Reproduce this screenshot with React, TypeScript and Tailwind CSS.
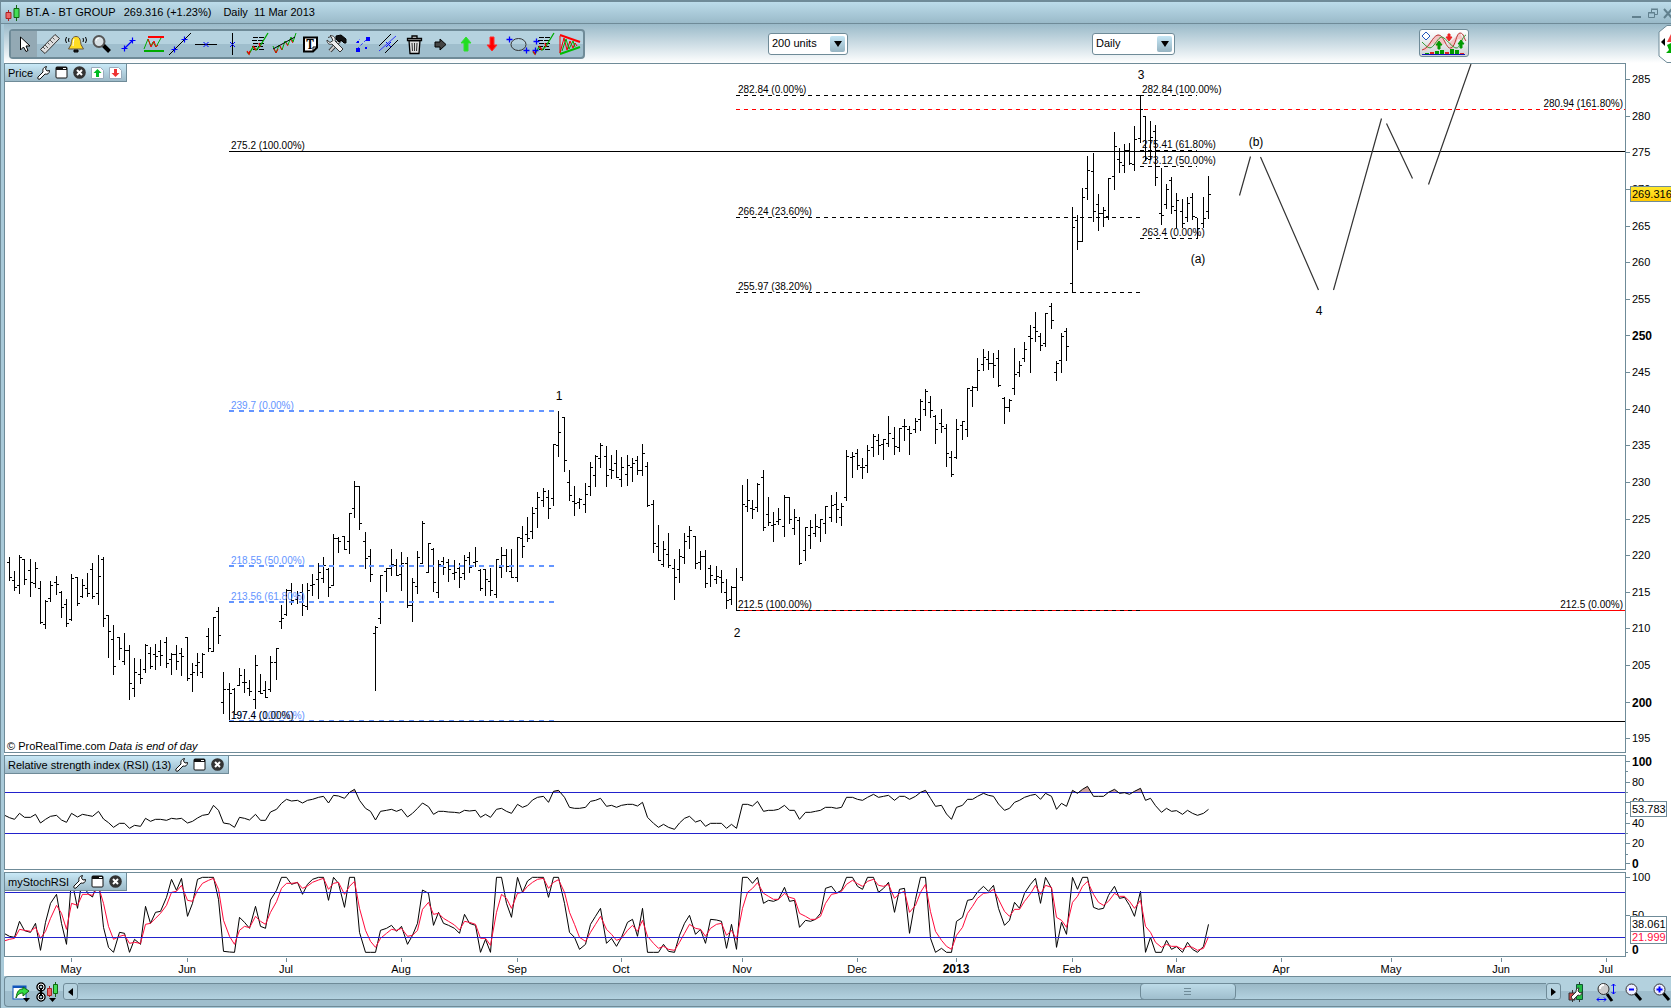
import { FC, ReactNode } from "react";

// one entry per session: high, low, open, close (chart y positions)
const BARS = `557 580 562 577,571 590 580 587,555 593 585 557,559 584 559 579,559 596 570 582,562 587 583 568,581 623 588 622,600 628 624 601,581 601 598 585,576 594 582 584,
591 617 592 607,599 626 604 623,574 620 619 578,577 605 577 603,579 597 596 585,573 596 588 593,563 598 569 596,555 604 593 576,557 626 559 618,615 657 615 631,
625 674 639 666,637 659 637 648,633 664 661 650,645 699 650 683,658 696 688 672,659 683 674 678,644 672 669 645,647 668 653 666,644 669 654 656,640 665 651 655,
637 667 642 663,653 674 659 654,645 669 654 661,648 675 653 656,637 680 637 678,663 691 674 672,653 675 665 662,653 677 672 654,628 651 636 648,617 651 651 617,
607 643 611 635,672 713 702 689,683 721 689 693,688 714 689 714,668 685 685 675,669 692 682 682,680 695 688 691,655 708 699 665,674 693 691 693,681 697 690 697,
656 691 689 662,648 679 662 648,605 628 621 618,589 615 614 590,583 604 590 600,591 603 599 595,584 615 592 605,583 609 606 590,574 595 585 584,563 598 579 572,
557 582 578 565,568 596 569 587,534 585 585 538,537 552 538 541,536 549 536 549,513 553 541 513,481 517 508 486,486 529 486 523,532 568 541 558,549 581 556 574,
626 690 633 627,575 623 618 575,568 591 571 568,549 575 568 564,559 575 565 575,552 590 574 563,557 607 563 605,578 621 605 582,551 593 586 557,521 563 563 523,
543 572 572 543,548 591 549 582,560 597 592 564,557 574 561 567,559 581 562 569,560 579 573 572,563 587 568 577,555 579 573 560,552 572 557 567,547 566 562 561,
569 590 570 588,569 595 569 579,568 595 581 590,559 597 594 559,547 577 567 555,549 571 555 566,549 577 571 577,537 581 577 537,526 557 538 546,517 541 534 538,
507 538 531 513,492 527 508 497,488 506 500 491,490 518 497 508,444 505 498 444,411 456 445 432,417 471 417 460,470 500 482 495,486 515 501 503,498 508 502 499,
483 512 504 494,462 495 486 467,455 486 475 456,443 467 458 445,446 486 456 475,455 478 469 470,450 477 463 477,457 486 479 467,455 485 474 465,458 481 467 463,
456 474 460 470,444 475 470 453,462 506 466 505,500 552 504 543,525 560 546 560,541 566 564 549,533 567 554 565,559 599 568 577,549 582 569 556,533 563 557 541,
526 548 536 530,536 568 536 563,551 569 562 556,550 587 556 583,565 586 568 575,566 583 579 576,570 592 577 582,579 608 592 600,586 604 599 587,568 610 587 610,
485 580 577 504,479 511 506 500,500 518 508 509,483 511 507 484,470 530 477 527,497 525 514 522,512 541 525 524,508 524 521 519,495 536 526 497,497 523 497 519,
509 534 528 517,517 564 520 563,527 560 550 527,520 548 535 527,514 536 533 526,519 541 527 519,506 533 523 506,495 521 517 505,492 522 504 509,503 525 517 506,
450 500 497 456,452 477 457 456,449 469 453 465,458 478 467 467,445 472 465 450,434 456 447 436,434 454 440 445,439 459 444 439,416 446 443 433,427 454 438 446,
428 451 447 428,419 440 426 426,426 454 429 433,418 432 429 421,399 430 419 401,389 415 409 391,396 417 402 410,415 443 416 429,409 432 423 426,424 466 428 453,
451 476 457 474,419 458 457 429,421 439 425 421,388 436 429 388,386 406 390 387,358 390 387 370,349 370 364 357,351 369 359 363,353 377 363 365,350 386 358 385,
397 423 398 407,399 411 407 400,348 394 388 374,361 376 372 365,342 361 358 349,325 372 336 338,312 341 327 331,333 350 336 345,313 346 343 313,303 328 306 320,
361 380 372 363,333 372 360 336,328 360 331 346,207 292 283 227,215 249 220 241,188 241 241 197,156 199 188 170,153 221 171 211,194 230 204 213,207 226 213 210,
178 219 216 178,132 189 176 146,148 172 159 162,144 172 165 150,143 164 150 163,126 170 164 139,95 142 138 109,116 160 116 158,121 159 159 137,125 185 131 177,
168 224 213 215,184 208 204 189,177 213 180 206,193 227 210 200,199 227 211 223,197 221 217 203,193 219 197 216,218 238 217 228,197 227 223 218,176 218 211 194`
  .split(",")
  .map((b) => b.trim().split(" ").map(Number));

// indicator levels are kept at three steps per pixel
const RSI = [
  203, 208, 190, 202, 202, 193, 219, 208, 199, 196, 210, 217, 190, 201, 193, 196, 199, 184, 207, 218,
  232, 220, 220, 235, 226, 229, 205, 214, 208, 208, 211, 205, 207, 205, 219, 214, 204, 196, 193, 166,
  181, 219, 222, 232, 202, 205, 210, 193, 211, 211, 186, 178, 160, 148, 153, 151, 159, 151, 148, 142,
  139, 159, 136, 138, 145, 127, 118, 151, 175, 184, 210, 184, 181, 178, 184, 178, 201, 190, 175, 159,
  170, 193, 184, 184, 186, 187, 189, 181, 183, 181, 202, 193, 202, 178, 175, 184, 190, 163, 172, 166,
  150, 142, 139, 157, 124, 121, 142, 172, 175, 175, 172, 154, 151, 145, 169, 166, 172, 166, 163, 163,
  168, 157, 202, 220, 232, 223, 232, 238, 219, 205, 199, 216, 211, 229, 220, 220, 220, 235, 223, 235,
  163, 163, 168, 154, 184, 181, 181, 178, 166, 181, 181, 208, 187, 187, 184, 181, 172, 172, 175, 172,
  142, 142, 148, 151, 142, 133, 142, 139, 136, 151, 139, 139, 148, 139, 127, 121, 145, 169, 166, 192,
  208, 172, 166, 148, 148, 139, 130, 136, 139, 162, 181, 175, 157, 151, 142, 136, 133, 148, 130, 139,
  178, 160, 169, 121, 130, 118, 109, 139, 139, 139, 127, 118, 130, 128, 133, 124, 115, 151, 145, 167,
  187, 175, 184, 182, 193, 181, 190, 196, 190, 178,
];

const STOCH = [
  559, 562, 514, 542, 547, 520, 601, 517, 460, 433, 520, 583, 385, 475, 385, 430, 441, 385, 532, 592,
  607, 547, 550, 607, 568, 583, 469, 520, 487, 484, 442, 388, 421, 385, 499, 460, 388, 382, 382, 382,
  448, 604, 606, 607, 502, 517, 535, 469, 529, 535, 450, 421, 382, 382, 403, 397, 433, 403, 388, 382,
  382, 451, 382, 400, 472, 382, 382, 547, 607, 607, 607, 541, 535, 526, 544, 529, 583, 556, 520, 420,
  430, 526, 487, 520, 526, 535, 550, 493, 520, 526, 607, 568, 607, 382, 382, 460, 502, 382, 427, 393,
  382, 382, 382, 442, 382, 382, 460, 547, 562, 598, 583, 523, 499, 475, 580, 565, 589, 562, 517, 508,
  559, 475, 607, 607, 607, 583, 604, 607, 556, 520, 496, 553, 538, 580, 508, 510, 514, 595, 523, 598,
  382, 382, 400, 382, 460, 451, 454, 448, 412, 454, 451, 532, 511, 514, 508, 490, 415, 409, 429, 421,
  382, 382, 409, 418, 382, 382, 427, 415, 397, 487, 418, 415, 550, 448, 382, 382, 565, 607, 595, 607,
  607, 514, 502, 451, 448, 426, 409, 424, 406, 475, 526, 511, 457, 475, 430, 403, 385, 460, 382, 415,
  592, 517, 553, 382, 418, 382, 382, 472, 478, 475, 436, 409, 445, 442, 466, 499, 424, 607, 562, 607,
  607, 571, 598, 590, 607, 577, 598, 607, 589, 523,
];

const SIGNAL = [
  568, 565, 538, 541, 544, 532, 565, 544, 505, 466, 490, 538, 460, 466, 433, 433, 436, 410, 460, 529,
  568, 559, 555, 580, 577, 580, 523, 520, 505, 490, 466, 427, 424, 406, 451, 454, 421, 400, 391, 385,
  418, 511, 559, 583, 541, 529, 533, 499, 514, 523, 487, 455, 415, 400, 400, 398, 415, 408, 397, 390,
  385, 418, 400, 397, 433, 409, 394, 475, 541, 574, 592, 565, 550, 538, 541, 535, 559, 556, 541, 478,
  457, 493, 490, 505, 514, 525, 540, 514, 517, 523, 565, 565, 586, 487, 433, 445, 475, 430, 427, 409,
  397, 388, 385, 415, 397, 389, 427, 487, 523, 562, 574, 547, 523, 499, 538, 553, 571, 565, 541, 526,
  544, 511, 559, 580, 595, 589, 598, 601, 577, 550, 523, 535, 538, 559, 535, 523, 520, 556, 541, 568,
  475, 427, 415, 398, 430, 439, 448, 448, 430, 442, 446, 490, 499, 508, 508, 499, 460, 433, 430, 424,
  403, 391, 401, 409, 394, 388, 406, 409, 403, 445, 430, 424, 487, 466, 427, 403, 485, 544, 571, 589,
  598, 556, 532, 490, 469, 445, 430, 428, 418, 448, 484, 499, 478, 478, 454, 431, 406, 433, 406, 412,
  502, 511, 532, 457, 439, 409, 394, 433, 457, 466, 454, 430, 439, 439, 454, 475, 451, 529, 547, 577,
  592, 583, 589, 589, 598, 589, 592, 601, 595, 560,
];

const barX = (i: number) => Math.floor(9.1 + i * 5.2365);

const barsPath = BARS.map(([hi, lo, open, close], i) => {
  const x = barX(i);
  return `M${x + 0.5} ${hi}V${lo + 1}M${x - 2} ${open + 0.5}H${x}M${x + 1} ${close + 0.5}H${x + 3}`;
}).join("");

const linePath = (start: number, values: number[]) =>
  `M4 ${750 + start / 3}` + values.map((v, i) => `L${barX(i) + 0.5} ${750 + v / 3}`).join("");

const rsiPath = linePath(195, RSI);

const priceTicks = Array.from({ length: 19 }, (_, i) => 285 - i * 5);
const priceY = (p: number) => Math.round(79 + (285 - p) * 7.325);

const MONTHS: [string, number][] = [
  ["May", 71],
  ["Jun", 187],
  ["Jul", 286],
  ["Aug", 401],
  ["Sep", 517],
  ["Oct", 621],
  ["Nov", 742],
  ["Dec", 857],
  ["2013", 956],
  ["Feb", 1072],
  ["Mar", 1176],
  ["Apr", 1281],
  ["May", 1391],
  ["Jun", 1501],
  ["Jul", 1606],
];

// x1, x2, y
const BLACK_FIBS = [
  [736, 1140, 95],
  [1140, 1197, 95],
  [736, 1140, 217],
  [736, 1140, 292],
  [1140, 1197, 150],
  [1140, 1197, 166],
  [1140, 1197, 238],
];

const FIB_LABELS: [string, number, number][] = [
  ["282.84 (0.00%)", 738, 93],
  ["282.84 (100.00%)", 1142, 93],
  ["275.2 (100.00%)", 231, 149],
  ["275.41 (61.80%)", 1142, 148],
  ["273.12 (50.00%)", 1142, 164],
  ["266.24 (23.60%)", 738, 215],
  ["263.4 (0.00%)", 1142, 236],
  ["255.97 (38.20%)", 738, 290],
  ["212.5 (100.00%)", 738, 608],
  ["197.4 (0.00%)", 231, 719],
];

const BLUE_LABELS: [string, number, number][] = [
  ["239.7 (0.00%)", 231, 409],
  ["218.55 (50.00%)", 231, 564],
  ["213.56 (61.80%)", 231, 600],
  ["197.4 (100.00%)", 231, 719],
];

const WAVES: [string, number, number][] = [
  ["1", 559, 400],
  ["2", 737, 637],
  ["3", 1141, 79],
  ["4", 1319, 315],
  ["(a)", 1198, 263],
  ["(b)", 1256, 146],
];

const Icon: FC<{ children: ReactNode }> = ({ children }) => (
  <svg viewBox="0 0 26 26" className="h-[26px] w-[26px]" fill="none" stroke="#000">
    {children}
  </svg>
);

const plus = (x: number, y: number) => `M${x - 3} ${y}h6M${x} ${y - 3}v6`;

const study = (
  <>
    <path d="M8 6.5h12M7 9.5h12M8 12.5h12M7 15.5h11M8 18.5h11" strokeDasharray="5 1" />
    <path d="M2 21l2 2 4-7 3 3 4-4 8-13" stroke="#0a0" strokeWidth="1.3" />
    <path d="M2 20l2 3 1-3M8 15l3 4M14 12l1 4" stroke="#e00" strokeWidth="1.3" />
  </>
);

const TOOLS: [string, ReactNode][] = [
  ["Select", <path d="M9.5 6v13l3-3 2.500 4.500 2-1-2-4.500h4z" fill="#fff" />],
  [
    "Measure",
    <>
      <path d="M3.500 18.500L18 3.500l4.500 4L8 22.500z" fill="#ddd" stroke="#333" />
      <path d="M6 16l2 2M8 14l3 3M10.500 11.500l2 2M13 9l3 3M15.500 6.500l2 2" stroke="#555" />
    </>,
  ],
  [
    "Alert",
    <>
      <path d="M13 5.500c-4 0-4.500 4-5 8l-2.500 4.500h15L18 13.500c-.5-4-1-8-5-8z" fill="#fd2" stroke="#654" />
      <path d="M11 19h4v2h-4z" fill="#222" />
      <path d="M3.500 6q-2 3 0 6M6 7q-1 2 0 4M22.500 6q2 3 0 6M20 7q1 2 0 4" />
      <path d="M11 8q-1 3-1 7" stroke="#fff" />
    </>,
  ],
  [
    "Zoom",
    <>
      <path d="M14 14l6.500 6.500" strokeWidth="4" />
      <circle cx="10" cy="10.500" r="5.500" fill="#d8e0e4" stroke="#555" strokeWidth="2" />
      <path d="M7 10q0-3 3-3" stroke="#fff" />
    </>,
  ],
  ["Segment", <path d={plus(9.5, 17.5) + plus(17.5, 9.5) + "M9.500 17.500l8-8"} stroke="#00f" strokeWidth="1.200" />],
  [
    "Range",
    <>
      <path d="M7 6h16" stroke="#f00" strokeWidth="2" />
      <path d="M3 20h20" stroke="#0a0" strokeWidth="2" />
      <path d="M3 18l4-10 3 7 2-4 3 5 5-9" stroke="#0a0" />
      <path d="M7 8l3 8 3-6 2 6 2-2" stroke="#e00" />
    </>,
  ],
  [
    "Line",
    <>
      <path d="M2 24L24 2" />
      <path d={plus(7.5, 18.5) + plus(17.5, 8.5)} stroke="#00f" strokeWidth="1.200" />
    </>,
  ],
  [
    "Horizontal line",
    <>
      <path d="M2 13.500h22" />
      <path d="M10.500 11l5 5M15.500 11l-5 5" stroke="#00f" />
    </>,
  ],
  [
    "Vertical line",
    <>
      <path d="M13.500 2v22" />
      <path d="M11 11l5 5M16 11l-5 5" stroke="#00f" />
    </>,
  ],
  ["Fibonacci", study],
  [
    "Regression",
    <>
      <path d="M2 15l3 7 3-8 3 5 3-9 3 4 3-8 2 5 3-9" stroke="#0a0" strokeWidth="1" />
      <path d="M3 18l2 4 2-4M9 15l2 4M15 12l2 3M20 9l2 3" stroke="#e00" strokeWidth="1" />
      <path d="M2 18l22-12" />
    </>,
  ],
  [
    "Text",
    <>
      <path d="M7 6.500h13v10l-4 4H7z" fill="#fff" strokeWidth="2" />
      <path d="M16 20v-4h4" />
      <text x="13" y="18" textAnchor="middle" className="font-serif text-[13px] font-bold" fill="#000" stroke="none">
        T
      </text>
    </>,
  ],
  [
    "Tools",
    <>
      <path d="M19 7l-12 13" stroke="#333" strokeWidth="4" />
      <path d="M18 8l-11 12" stroke="#ccc" strokeWidth="2" />
      <path d="M5 6.500l3-1 2 4-3 2-3-2.500c0 4 3 5 5 4l8 8 3-3-8-8c1-3-1-5.500-5-5.500" fill="#eee" stroke="#333" />
      <path d="M13 5l5-1 5 4v4h-2l-3-3-2 2-3-3z" fill="#111" />
    </>,
  ],
  [
    "Channel",
    <>
      <path d="M8 18L20 6M7 12l4-4M16 18l3-3" stroke="#33f" strokeDasharray="3 2" />
      <path d="M7 17h4v4H7zM17 6h4v4h-4z" fill="#00f" stroke="none" />
      <path d="M8 10h2v2H8zM16 16h2v2h-2z" fill="#00f" stroke="none" />
    </>,
  ],
  [
    "Parallel",
    <>
      <path d="M4 15L16 3M10 22L23 9" />
      <path d="M4 20L21 5" stroke="#33f" />
      <path d="M11 11l5 5M16 11l-5 5" stroke="#00f" />
    </>,
  ],
  [
    "Delete",
    <>
      <path d="M8 9.500h11l-1 13H9z" fill="#ddd" strokeWidth="1.300" />
      <path d="M6.500 7.500h14v2h-14zM11 7V5h5v2" fill="#eee" strokeWidth="1.300" />
      <path d="M11 12l.5 8M13.500 12v8M16 12l-.5 8" stroke="#333" />
    </>,
  ],
  ["Right arrow", <path d="M8 11h5V8l6 5.500-6 5.500v-3H8z" fill="#444" />],
  ["Up arrow", <path d="M13 6l5 6h-3v8h-4v-8H8z" fill="#2d2" stroke="#3d3" />],
  ["Down arrow", <path d="M13 20l5-6h-3V6h-4v8H8z" fill="#f00" stroke="#f33" />],
  [
    "Ellipse",
    <>
      <ellipse cx="13.500" cy="13.500" rx="7.500" ry="6" stroke="#333" />
      <path d={plus(4.5, 8.5) + plus(21.5, 19.5)} stroke="#00f" strokeWidth="1.300" />
    </>,
  ],
  [
    "Fibonacci extension",
    <>
      {study}
      <path d={plus(5.5, 10.5) + plus(4.5, 19.5)} stroke="#00f" strokeWidth="1.300" />
    </>,
  ],
  [
    "Triangle",
    <>
      <path d="M3 5v17l4-15 3 12 3-9 3 7 2-5 2 3" stroke="#e00" />
      <path d="M5 20L9 8l3 10 4-8 2 6" stroke="#0a0" />
      <path d="M3 4l20 7" stroke="#f00" strokeWidth="2" />
      <path d="M3 23l20-7" stroke="#0b0" strokeWidth="2" />
    </>,
  ],
];

const Candles: FC<{ className?: string }> = ({ className }) => (
  <svg viewBox="0 0 16 16" className={className} strokeWidth="1">
    <path d="M3.500 5v11" stroke="#a22" />
    <path d="M1 7.500h5v6H1z" fill="#e66" stroke="#a22" />
    <path d="M11.500 0v16" stroke="#161" />
    <path d="M9 3.500h5v9H9z" fill="#4d5" stroke="#161" />
  </svg>
);

const PanelTab: FC<{ title: string; arrows?: boolean }> = ({ title, arrows }) => (
  <div className="absolute top-0 left-0 flex h-[18px] items-center gap-[3px] border-r border-b border-[#6f8b98] bg-gradient-to-b from-[#c9e9f7] to-[#9dbac8] px-[3px]">
    <span className="text-[11px] leading-4">{title}</span>
    <button aria-label={`${title} settings`}>
      <svg viewBox="0 0 15 15" className="h-[15px] w-[15px]">
        <path
          d="M2 12l5-5c-.8-2.500.5-5 3.500-5.500L9.500 4l1.500 2 2.500-.5c0 3-2 4.300-4.500 3.500l-5 5c-1.400 1-3-.6-2-2z"
          fill="#fff"
          stroke="#111"
        />
      </svg>
    </button>
    <button aria-label={`Maximize ${title}`}>
      <svg viewBox="0 0 15 15" className="h-[15px] w-[15px]">
        <rect x="2" y="2" width="11" height="11" rx="1" fill="#fff" stroke="#111" />
        <path d="M2 2h11v3H2z" fill="#111" />
        <path d="M9 3.500h3" stroke="#fff" />
      </svg>
    </button>
    <button aria-label={`Close ${title}`}>
      <svg viewBox="0 0 15 15" className="h-[15px] w-[15px]">
        <circle cx="7.500" cy="7.500" r="6.300" fill="#333" />
        <path d="M5 5l5 5M10 5l-5 5" stroke="#fff" strokeWidth="2" />
      </svg>
    </button>
    {arrows && (
      <>
        <button aria-label="Move up">
          <svg viewBox="0 0 15 15" className="h-[15px] w-[15px]">
            <path d="M1.500 2.500h9l3 3v8h-12z" fill="#fff" stroke="#9ab" />
            <path d="M7.500 4l4 4H9v4H6V8H3.500z" fill="#0b2" />
          </svg>
        </button>
        <button aria-label="Move down">
          <svg viewBox="0 0 15 15" className="h-[15px] w-[15px]">
            <path d="M1.500 2.500h9l3 3v8h-12z" fill="#fff" stroke="#9ab" />
            <path d="M7.500 12l4-4H9V4H6v4H3.500z" fill="#e33" />
          </svg>
        </button>
      </>
    )}
  </div>
);

const Picker: FC<{ label: string; value: string; className: string }> = ({ label, value, className }) => (
  <div className={`relative h-[22px] shrink-0 rounded-[3px] border border-[#6f8b98] bg-white ${className}`}>
    <select
      aria-label={label}
      defaultValue={value}
      className="block h-[19px] w-full appearance-none bg-transparent pl-[3px] text-[11px] outline-none"
    >
      <option>{value}</option>
    </select>
    <span className="pointer-events-none absolute top-[2px] right-[2px] bottom-[2px] flex w-[15px] items-center justify-center rounded-[2px] bg-gradient-to-b from-[#c5e6f5] to-[#96b4c2]">
      <svg viewBox="0 0 8 6" className="h-[6px] w-[8px]">
        <path d="M0 0h8L4 6z" />
      </svg>
    </span>
  </div>
);

const Tick: FC<{ y: number; label?: string; bold?: boolean }> = ({ y, label, bold }) => (
  <>
    <path d={`M0 ${y + 0.5}h${label ? 4 : 2}`} stroke="#6f8b98" />
    <text x="6" y={y + (bold ? 5 : 4)} className={bold ? "text-[12px] font-bold" : "text-[11px]"}>
      {label}
    </text>
  </>
);

const Magnifier: FC<{ sign: string }> = ({ sign }) => (
  <svg viewBox="0 0 20 20" className="h-[20px] w-[20px]">
    <path d="M11 11l6 7" stroke="#000" strokeWidth="3" />
    <circle cx="7.500" cy="7.500" r="5.500" fill="#eef" stroke="#333" />
    <path d={sign} stroke="#00f" strokeWidth="2" />
  </svg>
);

const App: FC = () => {
  return (
    <div className="overflow-hidden border-l border-[#6f8b98] bg-[#a9cad9] font-['Liberation_Sans',Arial,sans-serif] text-black">
      <header className="flex h-6 items-center border-t-2 border-b border-[#6f8b98] bg-gradient-to-b from-[#bcdcea] to-[#9abac9] pl-1 text-[11px] whitespace-pre">
        <Candles className="mr-[5px] h-4 w-4" />
        <h1>BT.A - BT GROUP</h1>
        <span className="ml-2">269.316 (+1.23%)</span>
        <span className="ml-3">Daily  11 Mar 2013</span>
        <div className="ml-auto flex items-center gap-1">
          <button aria-label="Minimize">
            <svg viewBox="0 0 12 12" className="h-3 w-3">
              <path d="M1 10h9" stroke="#61808e" strokeWidth="2" />
            </svg>
          </button>
          <button aria-label="Restore">
            <svg viewBox="0 0 12 12" className="h-3 w-3" fill="none" stroke="#61808e">
              <path d="M4.500 5V2.500h6v5H8M4 2h7M1.500 5.500h6v5h-6zM1 6h7" />
            </svg>
          </button>
          <button aria-label="Close">
            <svg viewBox="0 0 8 12" className="h-3 w-2">
              <path d="M1 2l8 9M1 11l8-9" stroke="#61808e" strokeWidth="2" />
            </svg>
          </button>
        </div>
      </header>

      <div className="ml-[3px] flex h-[39px] items-start bg-gradient-to-b from-[#9abac9] to-white pt-[5px] pl-[5px]">
        <div className="flex h-[30px] w-[576px] shrink-0 items-center rounded-[4px] border-2 border-[#6f8b98] bg-gradient-to-b from-[#b5d2df] from-50% to-[#9fbecd] to-50%">
          {TOOLS.map(([name, art], i) => (
            <button key={name} aria-label={name} className={i === 0 ? "bg-[#93a9b4]" : ""}>
              <Icon>{art}</Icon>
            </button>
          ))}
        </div>
        <Picker label="Units" value="200 units" className="mt-1 ml-[183px] w-[80px]" />
        <Picker label="Timeframe" value="Daily" className="mt-1 ml-[244px] w-[83px]" />
        <button
          aria-label="Trading"
          className="ml-[244px] h-[28px] w-[50px] shrink-0 rounded-[3px] border border-[#6f8b98] bg-gradient-to-b from-white to-[#cdd3d6]"
        >
          <svg viewBox="0 0 48 26" className="h-[26px] w-[48px]" fill="none">
            <path d="M2 20L18 4l8 8-8 7-5-6-7 8zM28 14L40 3l4 8-6-2-6 11z" fill="#f3c4c4" />
            <path d="M2 20C10 18 12 6 18 5s8 15 13 13S36 3 40 3s4 6 6 8" stroke="#b33" />
            <path d="M2 12c6 6 8 8 12 3s6-10 10-7 8 9 12 10 6-12 10-13" stroke="#393" />
            <path d="M6 2l4 4-4 4-4-4z" fill="#fff" stroke="#25b" />
            <path d="M18 19v-4h-2l3-4 3 4h-2v4zM40 18v-4h-2l3-4 3 4h-2v4z" fill="#090" stroke="#090" />
            <path d="M28 4v3h-2l3 4 3-4h-2V4z" fill="#e22" stroke="#e22" />
            <path d="M5 23h4v1H5zM15 21h4v3h-4zM20 20h4v4h-4zM30 19h4v5h-4zM35 20h4v4h-4z" fill="#090" />
            <path d="M10 22h4v2h-4zM25 22h4v2h-4zM40 23h4v1h-4z" fill="#d22" />
            <path d="M2 24.500h43" stroke="#11b" />
          </svg>
        </button>
        <button aria-label="Open side panel" className="-mt-1 ml-auto h-[38px] w-[13px] shrink-0">
          <svg viewBox="0 0 13 38" className="h-[38px] w-[13px]">
            <path d="M14 .5H9L1 7v24l8 6.500h5z" fill="#fff" stroke="#6f8b98" />
            <path d="M7 13v8l-4-4z" />
            <path d="M9 17l4-8v8z" fill="#e44" />
            <path d="M9 20l4-2v10H8l3-3z" fill="#0a0" />
          </svg>
        </button>
      </div>

      <main className="ml-[3px] bg-white">
        <section className="flex">
          <div className="relative h-[690px] min-w-0 flex-1 border border-[#6f8b98]">
            <svg className="block h-[688px] w-full">
              <g transform="translate(-5 -64)" fill="none">
                <g shapeRendering="crispEdges" stroke="#000">
                  <path d="M736 109.500H1700" stroke="#f00" strokeDasharray="4 4" />
                  <path d="M229 151.500H1700M229 721.500H1700" />
                  <path d="M736 610.500H1700" stroke="#f00" />
                  <path d="M736 610.500H1140" strokeDasharray="4 4" />
                  {BLACK_FIBS.map(([x1, x2, y]) => (
                    <path key={`${x1}-${y}`} d={`M${x1} ${y}.5H${x2}`} strokeDasharray="4 4" />
                  ))}
                  <path d={barsPath} />
                  <path
                    d="M229 411H554M229 566H554M229 602H554"
                    stroke="#6495ff"
                    strokeWidth="2"
                    strokeDasharray="5 5"
                  />
                  <path d="M229 720.500H554" stroke="#6495ff" strokeDasharray="5 5" />
                </g>
                <path
                  d="M1239.500 195.500l11-39M1260.500 157l58 133M1333.500 290l48-171.500M1386.500 123.500l26 55M1428.500 184.500L1471 64"
                  stroke="#333"
                  strokeWidth="1.200"
                />
                <g className="text-[10px]" fill="#6495ff">
                  {BLUE_LABELS.map(([t, x, y]) => (
                    <text key={t} x={x} y={y}>
                      {t}
                    </text>
                  ))}
                </g>
                <g className="text-[10px]" fill="#000">
                  {FIB_LABELS.map(([t, x, y]) => (
                    <text key={t} x={x} y={y}>
                      {t}
                    </text>
                  ))}
                  <text x="1623" y="107" textAnchor="end">
                    280.94 (161.80%)
                  </text>
                  <text x="1623" y="608" textAnchor="end">
                    212.5 (0.00%)
                  </text>
                </g>
                <g className="text-[12px]" fill="#000" textAnchor="middle">
                  {WAVES.map(([t, x, y]) => (
                    <text key={t} x={x} y={y}>
                      {t}
                    </text>
                  ))}
                </g>
              </g>
            </svg>
            <PanelTab title="Price" arrows />
            <p className="absolute bottom-0 left-[2px] text-[11px] leading-3">
              © ProRealTime.com <em>Data is end of day</em>
            </p>
          </div>
          <div className="relative h-[690px] w-[45px] shrink-0">
            <svg className="block h-[690px] w-full" shapeRendering="crispEdges">
              <g transform="translate(0 -63)">
                {priceTicks.map((p) => (
                  <Tick key={p} y={priceY(p)} label={String(p)} bold={p === 250 || p === 200} />
                ))}
              </g>
            </svg>
            <span className="absolute top-[123px] left-[4px] border border-[#6f8b98] bg-gradient-to-b from-[#ffe82a] to-[#ffc800] pl-px text-[11px] leading-[14px]">
              269.316
            </span>
          </div>
        </section>

        <section className="mt-[2px] flex">
          <div className="relative h-[115px] min-w-0 flex-1 border border-[#6f8b98]">
            <svg className="block h-[113px] w-full">
              <clipPath id="overbought">
                <path d="M0 750H1300V792H0z" />
              </clipPath>
              <g transform="translate(-5 -756)" fill="none">
                <path d={`${rsiPath}V792H4z`} fill="#cfa5a0" clipPath="url(#overbought)" />
                <path d="M0 792.500H1700M0 833.500H1700" stroke="#2222cc" />
                <path d={rsiPath} stroke="#000" strokeWidth="1" />
              </g>
            </svg>
            <PanelTab title="Relative strength index (RSI) (13)" />
          </div>
          <div className="relative h-[115px] w-[45px] shrink-0">
            <svg className="block h-[115px] w-full" shapeRendering="crispEdges">
              <g transform="translate(0 -755)">
                <Tick y={761} label="100" bold />
                <Tick y={771} />
                <Tick y={782} label="80" />
                <Tick y={792} />
                <Tick y={802} label="60" />
                <Tick y={813} />
                <Tick y={823} label="40" />
                <Tick y={833} />
                <Tick y={843} label="20" />
                <Tick y={854} />
                <Tick y={863} label="0" bold />
              </g>
            </svg>
            <span className="absolute top-[46px] left-[4px] border border-[#6f8b98] bg-white pl-px text-[11px] leading-[14px]">
              53.783
            </span>
          </div>
        </section>

        <section className="mt-[2px] flex">
          <div className="relative h-[85px] min-w-0 flex-1 border border-[#6f8b98]">
            <svg className="block h-[83px] w-full">
              <g transform="translate(-5 -873)" fill="none">
                <path d={linePath(550, STOCH)} stroke="#000" strokeWidth="1" />
                <path d={linePath(573, SIGNAL)} stroke="#ff0a3c" strokeWidth="1" />
                <path d="M0 892.500H1700M0 937.500H1700" stroke="#2222cc" />
              </g>
            </svg>
            <PanelTab title="myStochRSI" />
          </div>
          <div className="relative h-[85px] w-[45px] shrink-0">
            <svg className="block h-[85px] w-full" shapeRendering="crispEdges">
              <g transform="translate(0 -872)">
                <Tick y={877} label="100" />
                <Tick y={915} label="50" />
                <Tick y={952} />
                <text x="6" y="954" className="text-[12px] font-bold">
                  0
                </text>
              </g>
            </svg>
            <div className="absolute top-[44px] left-[4px] border border-[#6f8b98] bg-white text-[11px]">
              <p className="border-b border-[#6f8b98] pl-px leading-[14px]">38.061</p>
              <p className="pl-px leading-[11px] text-[#ff0a3c]">21.999</p>
            </div>
          </div>
        </section>

        <svg className="block h-[19px] w-full">
          <g transform="translate(-4 -957)" className="text-[11px]">
            {MONTHS.map(([m, x]) => (
              <g key={x}>
                <path d={`M${x}.5 958v4`} stroke="#6f8b98" />
                <text x={x} y="973" textAnchor="middle" className={m === "2013" ? "text-[12px] font-bold" : ""}>
                  {m}
                </text>
              </g>
            ))}
          </g>
        </svg>
      </main>

      <footer className="ml-[3px] h-[32px]">
        <div className="flex h-[31px] items-center rounded-l-[4px] border border-r-0 border-[#6f8b98] bg-gradient-to-b from-[#b3d1de] from-50% to-[#9fbecd] to-50% pl-[7px]">
          <button aria-label="Export chart">
            <svg viewBox="0 0 18 20" className="h-[20px] w-[18px]">
              <rect x="1" y="4" width="13" height="13" fill="#fff" stroke="#15b" />
              <path d="M1 4h13v2H1z" fill="#15b" />
              <path d="M4 16c1-7 3-9 7-9V5l6 4-6 5v-3c-3 0-5 1-7 5z" fill="#3d4" stroke="#161" />
              <path d="M11 16h7l-3.500 4z" />
            </svg>
          </button>
          <button aria-label="Link charts" className="ml-[6px] flex">
            <svg viewBox="0 0 10 20" className="h-[20px] w-[10px]" fill="none">
              <circle cx="5" cy="5" r="3" stroke="#000" strokeWidth="3.500" />
              <circle cx="5" cy="15" r="3" stroke="#000" strokeWidth="3.500" />
              <circle cx="5" cy="5" r="3" stroke="#fff" />
              <circle cx="5" cy="15" r="3" stroke="#fff" />
              <path d="M5 6v8" stroke="#000" strokeWidth="2" />
            </svg>
            <svg viewBox="0 0 13 20" className="h-[20px] w-[13px]">
              <path d="M3.500 4v11" stroke="#a22" />
              <path d="M1.500 6.500h4v7h-4z" fill="#e66" stroke="#a22" />
              <path d="M9.500 0v15" stroke="#161" />
              <path d="M7.500 2.500h4v9h-4z" fill="#4d5" stroke="#161" />
              <path d="M3 16h7l-3.500 4z" />
            </svg>
          </button>
          <button
            aria-label="Scroll left"
            className="ml-1 flex h-[17px] w-[15px] items-center justify-center rounded-[3px] border border-[#6f8b98] bg-[#b5d2df]"
          >
            <svg viewBox="0 0 5 8" className="h-2 w-[5px]">
              <path d="M5 0v8L0 4z" />
            </svg>
          </button>
          <div className="flex h-[17px] min-w-0 flex-1 border-y border-[#6f8b98] bg-gradient-to-b from-[#9ab8c6] to-[#b3d2e0]">
            <div className="grow-[1060]" />
            <div className="-my-px flex w-[96px] items-center justify-center rounded-[4px] border border-[#6f8b98] bg-gradient-to-b from-[#bddbe8] to-[#9fbecd]">
              <svg viewBox="0 0 8 7" className="h-[7px] w-2">
                <path d="M0 .5h7M0 3.500h7M0 6.500h7" stroke="#6f8b98" />
              </svg>
            </div>
            <div className="grow-[310]" />
          </div>
          <button
            aria-label="Scroll right"
            className="flex h-[17px] w-[15px] items-center justify-center rounded-[3px] border border-[#6f8b98] bg-[#b5d2df]"
          >
            <svg viewBox="0 0 5 8" className="h-2 w-[5px]">
              <path d="M0 0v8l5-4z" />
            </svg>
          </button>
          <button aria-label="Chart settings" className="ml-[7px]">
            <svg viewBox="0 0 16 20" className="h-[20px] w-4">
              <path d="M4.500 8v12M11.500 0v20" stroke="#333" />
              <path d="M1 11h6v7H1z" fill="#c44" stroke="#333" />
              <path d="M8.500 2.500h6v15h-6z" fill="#2b4" stroke="#153" />
              <path d="M3 15l5-5c0-3 1-4 3-4l-1 3 2 2 2-1c0 3-2 4-4 3l-5 5z" fill="#fff" stroke="#333" />
            </svg>
          </button>
          <button aria-label="Fit chart" className="ml-3">
            <svg viewBox="0 0 20 20" className="h-[20px] w-[20px]">
              <path d="M11 12l5 7" stroke="#000" strokeWidth="3" />
              <circle cx="7.500" cy="7" r="5.500" fill="#ccc" stroke="#333" />
              <path d="M4 7q0-4 4-4" stroke="#fff" fill="none" strokeWidth="2" />
              <path d="M17.500 2v10M15.500 4l2-2 2 2M15.500 10l2 2 2-2M1 17.500h9M3 15.500l-2 2 2 2M8 15.500l2 2-2 2" stroke="#00f" fill="none" />
            </svg>
          </button>
          <button aria-label="Zoom out" className="ml-2">
            <Magnifier sign="M5 7.500h5" />
          </button>
          <button aria-label="Zoom in" className="ml-2 w-[19px]">
            <Magnifier sign="M4.500 7.500h6M7.500 4.500v6" />
          </button>
        </div>
      </footer>
    </div>
  );
};

export default App;
